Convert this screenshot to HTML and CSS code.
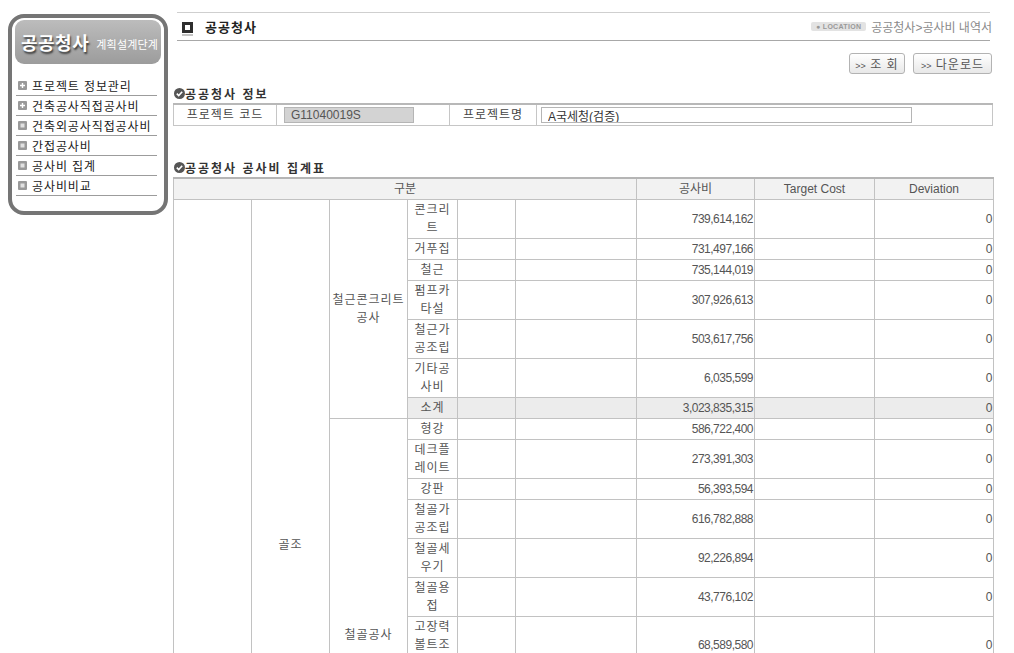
FILE: index.html
```html
<!DOCTYPE html>
<html lang="ko">
  <head>
    <meta charset="UTF-8" />
    <meta name="viewport" content="width=device-width, initial-scale=1.0" />
    <title>공공청사 - 공사비 내역서</title>
    <link rel="stylesheet" href="styles.css">
  </head>

  <body>
    <div class="page">
      <div class="side">
        <div class="side-head">
          <span class="side-title">공공청사</span>
          <span class="side-sub">계획설계단계</span>
        </div>
        <ul class="menu">
          <li>
            <svg class="ico" width="9" height="9"><rect width="9" height="9" rx="1" fill="#9a9a9a" /><path d="M2 4.5h5M4.5 2v5" stroke="#fff" stroke-width="1.4" /></svg>
            프로젝트 정보관리
          </li>
          <li>
            <svg class="ico" width="9" height="9"><rect width="9" height="9" rx="1" fill="#9a9a9a" /><path d="M2 4.5h5M4.5 2v5" stroke="#fff" stroke-width="1.4" /></svg>
            건축공사직접공사비
          </li>
          <li>
            <svg class="ico" width="9" height="9"><rect width="9" height="9" rx="1" fill="#9a9a9a" /><rect x="2.5" y="2.5" width="4" height="4" fill="#e2e2e2" /></svg>
            건축외공사직접공사비
          </li>
          <li>
            <svg class="ico" width="9" height="9"><rect width="9" height="9" rx="1" fill="#9a9a9a" /><rect x="2.5" y="2.5" width="4" height="4" fill="#e2e2e2" /></svg>
            간접공사비
          </li>
          <li>
            <svg class="ico" width="9" height="9"><rect width="9" height="9" rx="1" fill="#9a9a9a" /><rect x="2.5" y="2.5" width="4" height="4" fill="#e2e2e2" /></svg>
            공사비 집계
          </li>
          <li>
            <svg class="ico" width="9" height="9"><rect width="9" height="9" rx="1" fill="#9a9a9a" /><rect x="2.5" y="2.5" width="4" height="4" fill="#e2e2e2" /></svg>
            공사비비교
          </li>
        </ul>
      </div>

      <div class="main">
        <div class="title-bar">
          <h2 class="title">
            <svg class="title-ico" width="11" height="14"><rect x="1.5" y="1.5" width="8" height="8" fill="#fff" stroke="#2e2e2e" stroke-width="3" /><rect x="0" y="12" width="11" height="2" fill="#c4c4c4" /></svg>
            공공청사
          </h2>
          <div class="location">
            <span class="loc-badge">● LOCATION</span>
            공공청사&gt;공사비 내역서
          </div>
        </div>

        <div class="btn-row">
          <button class="btn w-56"><span class="arr">&gt;&gt;</span> 조 회</button>
          <button class="btn w-79"><span class="arr">&gt;&gt;</span> 다운로드</button>
        </div>

        <h3 class="sub-title">
          <svg class="check" width="11" height="11"><circle cx="5.5" cy="5.5" r="5.5" fill="#555" /><path d="M2.8 5.6l1.9 1.9 3.5-3.7" fill="none" stroke="#fff" stroke-width="1.6" /></svg>
          공공청사 정보
        </h3>
        <table class="info">
          <colgroup>
            <col class="w-103" />
            <col class="w-173" />
            <col class="w-87" />
            <col />
          </colgroup>
          <tr>
            <th>프로젝트 코드</th>
            <td><input type="text" class="code" value="G11040019S" readonly /></td>
            <th>프로젝트명</th>
            <td><input type="text" class="name" value="A국세청(검증)" /></td>
          </tr>
        </table>

        <h3 class="sub-title second">
          <svg class="check" width="11" height="11"><circle cx="5.5" cy="5.5" r="5.5" fill="#555" /><path d="M2.8 5.6l1.9 1.9 3.5-3.7" fill="none" stroke="#fff" stroke-width="1.6" /></svg>
          공공청사 공사비 집계표
        </h3>
        <table class="sum">
          <colgroup>
            <col class="w-78" />
            <col class="w-78" />
            <col class="w-78" />
            <col class="w-50" />
            <col class="w-58" />
            <col class="w-121" />
            <col class="w-118" />
            <col class="w-120" />
            <col class="w-119" />
          </colgroup>
          <thead>
            <tr>
              <th colspan="6">구분</th>
              <th>공사비</th>
              <th>Target Cost</th>
              <th>Deviation</th>
            </tr>
          </thead>
          <tbody>
            <tr>
              <td rowspan="20"></td>
              <td rowspan="20">골조</td>
              <td rowspan="7">철근콘크리트공사</td>
              <td>콘크리트</td><td></td><td></td>
              <td class="num">739,614,162</td><td></td><td class="num">0</td>
            </tr>
            <tr>
              <td>거푸집</td><td></td><td></td>
              <td class="num">731,497,166</td><td></td><td class="num">0</td>
            </tr>
            <tr>
              <td>철근</td><td></td><td></td>
              <td class="num">735,144,019</td><td></td><td class="num">0</td>
            </tr>
            <tr>
              <td>펌프카타설</td><td></td><td></td>
              <td class="num">307,926,613</td><td></td><td class="num">0</td>
            </tr>
            <tr>
              <td>철근가공조립</td><td></td><td></td>
              <td class="num">503,617,756</td><td></td><td class="num">0</td>
            </tr>
            <tr>
              <td>기타공사비</td><td></td><td></td>
              <td class="num">6,035,599</td><td></td><td class="num">0</td>
            </tr>
            <tr class="subtotal">
              <td>소계</td><td></td><td></td>
              <td class="num">3,023,835,315</td><td></td><td class="num">0</td>
            </tr>
            <tr>
              <td rowspan="12">철골공사</td>
              <td>형강</td><td></td><td></td>
              <td class="num">586,722,400</td><td></td><td class="num">0</td>
            </tr>
            <tr>
              <td>데크플레이트</td><td></td><td></td>
              <td class="num">273,391,303</td><td></td><td class="num">0</td>
            </tr>
            <tr>
              <td>강판</td><td></td><td></td>
              <td class="num">56,393,594</td><td></td><td class="num">0</td>
            </tr>
            <tr>
              <td>철골가공조립</td><td></td><td></td>
              <td class="num">616,782,888</td><td></td><td class="num">0</td>
            </tr>
            <tr>
              <td>철골세우기</td><td></td><td></td>
              <td class="num">92,226,894</td><td></td><td class="num">0</td>
            </tr>
            <tr>
              <td>철골용접</td><td></td><td></td>
              <td class="num">43,776,102</td><td></td><td class="num">0</td>
            </tr>
            <tr>
              <td>고장력볼트조립</td><td></td><td></td>
              <td class="num">68,589,580</td><td></td><td class="num">0</td>
            </tr>
            <tr>
              <td>내화피복</td><td></td><td></td>
              <td class="num">152,318,740</td><td></td><td class="num">0</td>
            </tr>
            <tr>
              <td>철골도장</td><td></td><td></td>
              <td class="num">47,905,216</td><td></td><td class="num">0</td>
            </tr>
            <tr>
              <td>스터드볼트</td><td></td><td></td>
              <td class="num">12,604,388</td><td></td><td class="num">0</td>
            </tr>
            <tr>
              <td>기타공사비</td><td></td><td></td>
              <td class="num">4,127,930</td><td></td><td class="num">0</td>
            </tr>
            <tr class="subtotal">
              <td>소계</td><td></td><td></td>
              <td class="num">1,954,839,035</td><td></td><td class="num">0</td>
            </tr>
            <tr>
              <td>조적공사</td>
              <td>시멘트벽돌</td><td></td><td></td>
              <td class="num">38,410,275</td><td></td><td class="num">0</td>
            </tr>
          </tbody>
        </table>
      </div>
    </div>
  </body>
</html>
```

FILE: styles.css
```css
body {
  margin: 0;
  font-family: "Liberation Sans", "Noto Sans CJK KR", sans-serif;
  font-size: 12px;
  color: #444;
  background-color: #fff;
}

.page {
  display: flex;
  align-items: flex-start;
}

/* Sidebar */
.side {
  width: 160px;
  height: 201px;
  box-sizing: border-box;
  margin: 14px 0 0 8px;
  padding: 2px 3px;
  border: 4px solid #757575;
  border-radius: 16px;
}

.side-head {
  height: 44px;
  display: flex;
  align-items: center;
  gap: 7px;
  padding-left: 6px;
  border-radius: 9px;
  background: linear-gradient(#bcbcbc, #9c9c9c);
  color: #fff;
}

.side-title {
  font-size: 18px;
  font-weight: 700;
  letter-spacing: 0.5px;
  text-shadow: 1px 2px 2px #333;
}

.side-sub {
  font-size: 11px;
  margin-top: 3px;
  letter-spacing: 0.2px;
}

.menu {
  list-style: none;
  margin: 12px 4px 0 1px;
  padding: 0;
}

.menu li {
  display: flex;
  align-items: center;
  height: 19px;
  padding-left: 2px;
  border-bottom: 1px solid #9c9c9c;
  color: #1a1a1a;
  font-size: 12px;
  letter-spacing: 0.9px;
  white-space: nowrap;
}

.ico {
  flex: none;
  margin-right: 5px;
}

/* Main */
.main {
  width: 820px;
  margin-left: 5px;
}

.title-bar {
  display: flex;
  align-items: center;
  justify-content: space-between;
  height: 27px;
  margin: 12px 3px 0 4px;
  padding-left: 5px;
  border-top: 1px solid #cfcfcf;
  border-bottom: 1px solid #a8a8a8;
}

.title {
  display: flex;
  align-items: center;
  gap: 12px;
  margin: 0;
  font-size: 13px;
  font-weight: 700;
  letter-spacing: 1px;
  color: #222;
}

.title-ico {
  margin-top: 4px;
}

.location {
  display: flex;
  align-items: center;
  gap: 5px;
  color: #8a8a8a;
  font-size: 12px;
  white-space: nowrap;
  margin-right: -2px;
}

.loc-badge {
  font-size: 7px;
  font-weight: 700;
  line-height: 9px;
  padding: 0 5px;
  border-radius: 2px;
  background-color: #e3e3e3;
  color: #999;
  letter-spacing: 0.3px;
}

.btn-row {
  display: flex;
  justify-content: flex-end;
  gap: 8px;
  margin-top: 12px;
  padding-right: 1px;
}

.btn {
  height: 21px;
  padding: 0;
  border: 1px solid #b3b3b3;
  border-radius: 3px;
  background: linear-gradient(#fff, #e8e8e8);
  color: #555;
  font-family: inherit;
  font-size: 12px;
  letter-spacing: 1px;
  cursor: pointer;
}

.arr {
  font-size: 9px;
  letter-spacing: 0;
}

.sub-title {
  display: flex;
  align-items: center;
  height: 16px;
  margin: 11px 0 2px;
  padding-left: 1px;
  font-size: 12px;
  font-weight: 700;
  color: #333;
  letter-spacing: 2px;
}

.sub-title.second {
  margin: 33px 0 2px;
}

/* Tables */
table {
  width: 820px;
  border-collapse: collapse;
  table-layout: fixed;
}

.info {
  border-top: 2px solid #b8b8b8;
}

.info th,
.info td {
  height: 20px;
  padding: 0;
  border: 1px solid #c6c6c6;
  font-weight: 400;
  color: #444;
  line-height: 19px;
  letter-spacing: 1px;
}

.info td {
  padding-left: 7px;
}

.info td:last-child {
  padding-left: 4px;
}

.info input {
  display: block;
  height: 16px;
  box-sizing: border-box;
  padding: 0 6px;
  border: 1px solid #b5b5b5;
  font-family: inherit;
  font-size: 12px;
  color: #333;
  letter-spacing: 0;
}

.info .code {
  width: 130px;
  background-color: #d3d3d3;
  color: #555;
}

.info .name {
  width: 371px;
  background-color: #fff;
}

.sum {
  border-top: 2px solid #b5b5b5;
}

.sum th,
.sum td {
  padding: 1px 2px;
  line-height: 18px;
  border: 1px solid #c2c2c2;
  text-align: center;
  vertical-align: middle;
  color: #555;
  font-weight: 400;
  letter-spacing: 1px;
}

.sum th {
  background-color: #f2f2f2;
  letter-spacing: 0;
}

.sum td.num {
  text-align: right;
  padding-right: 1px;
  letter-spacing: -0.5px;
}

.sum .subtotal td {
  background-color: #ececec;
}

/* Widths */
.w-50 { width: 50px; }
.w-56 { width: 56px; }
.w-58 { width: 58px; }
.w-78 { width: 78px; }
.w-79 { width: 79px; }
.w-87 { width: 87px; }
.w-103 { width: 103px; }
.w-118 { width: 118px; }
.w-119 { width: 119px; }
.w-120 { width: 120px; }
.w-121 { width: 121px; }
.w-173 { width: 173px; }
```
